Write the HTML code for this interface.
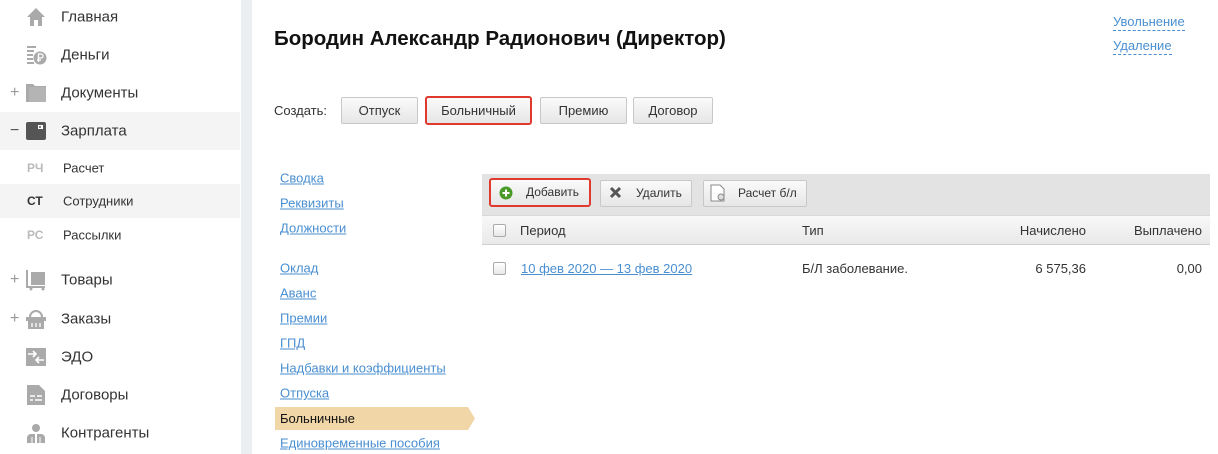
<!DOCTYPE html><html><head><meta charset="utf-8"><style>
body{margin:0;width:1218px;height:454px;overflow:hidden;background:#fff;font-family:"Liberation Sans",Arial,sans-serif;position:relative;color:#333}
.a{position:absolute;white-space:nowrap}
.side{position:absolute;left:0;top:0;width:240px;height:454px;background:#fff}
.strip{position:absolute;left:241px;top:0;width:11px;height:454px;background:#eceff2}
.mi{position:absolute;left:61px;font-size:15px;color:#333;transform:translateY(-50%)}
.si{position:absolute;left:63px;font-size:13px;color:#333;transform:translateY(-50%)}
.ab{position:absolute;left:27px;font-size:12px;font-weight:bold;color:#bbb;transform:translateY(-50%)}
.pl{position:absolute;left:10px;font-size:16px;color:#999;transform:translateY(-50%)}
.ic{position:absolute;left:26px}
.btn{position:absolute;height:27px;border:1px solid #c8c8c8;border-radius:2px;background:linear-gradient(#fafafa,#e6e6e6);font-size:13px;color:#333;text-align:center;line-height:25px;box-sizing:border-box}
.red{border:2px solid #e03a2f;border-radius:3px}
.lk{position:absolute;left:280px;font-size:13px;color:#4a8fd1;text-decoration:underline;transform:translateY(-50%)}
.cb{position:absolute;width:11px;height:11px;border:1px solid #aaa;border-radius:2px;background:linear-gradient(#fff,#e8e8e8)}
</style></head><body>
<div class="side"></div><div class="strip"></div>
<div class="a" style="left:0;top:112px;width:240px;height:38px;background:#f4f4f4"></div>
<div class="a" style="left:0;top:184px;width:240px;height:34px;background:#f4f4f4"></div>

<svg class="ic" style="top:7px" width="20" height="20" viewBox="0 0 20 20"><path d="M10 1L1 10h3v9h4v-6h4v6h4v-9h3z" fill="#aaa"/></svg>
<div class="mi" style="top:17px">Главная</div>
<svg class="ic" style="top:45px" width="22" height="20" viewBox="0 0 22 20"><rect x="1" y="1" width="9" height="2" fill="#aaa"/><rect x="1" y="5" width="7" height="2" fill="#aaa"/><rect x="1" y="9" width="6" height="2" fill="#aaa"/><rect x="1" y="13" width="6" height="2" fill="#aaa"/><rect x="1" y="17" width="7" height="2" fill="#aaa"/><circle cx="14" cy="13" r="6.5" fill="#aaa"/><path d="M12.5 17v-8h2.5a2 2 0 010 4h-3.5M11 15h4" stroke="#fff" stroke-width="1.3" fill="none"/></svg>
<div class="mi" style="top:55px">Деньги</div>
<div class="pl" style="top:93px">+</div>
<svg class="ic" style="top:83px" width="21" height="19" viewBox="0 0 21 19"><path d="M0 1h7l2 2h11v16H0z" fill="#aaa"/><rect x="3" y="4" width="17" height="15" fill="#b4b4b4"/></svg>
<div class="mi" style="top:93px">Документы</div>
<div class="pl" style="top:131px;color:#555">−</div>
<svg class="ic" style="top:122px" width="20" height="18" viewBox="0 0 20 18"><rect x="0" y="0" width="20" height="18" rx="2" fill="#555"/><rect x="12" y="3" width="5" height="4" fill="#fff"/><circle cx="14" cy="5" r="1" fill="#555"/></svg>
<div class="mi" style="top:131px">Зарплата</div>
<div class="ab" style="top:168px">РЧ</div><div class="si" style="top:168px">Расчет</div>
<div class="ab" style="top:201px;color:#333">СТ</div><div class="si" style="top:201px">Сотрудники</div>
<div class="ab" style="top:235px">РС</div><div class="si" style="top:235px">Рассылки</div>
<div class="pl" style="top:280px">+</div>
<svg class="ic" style="top:270px" width="20" height="21" viewBox="0 0 20 21"><path d="M1 0v17h18" stroke="#aaa" stroke-width="2" fill="none"/><rect x="5" y="2" width="14" height="13" fill="#aaa"/><circle cx="5" cy="19" r="1.5" fill="#aaa"/><circle cx="17" cy="19" r="1.5" fill="#aaa"/></svg>
<div class="mi" style="top:280px">Товары</div>
<div class="pl" style="top:319px">+</div>
<svg class="ic" style="top:309px" width="20" height="20" viewBox="0 0 20 20"><path d="M4 8a6 6 0 0112 0" stroke="#aaa" stroke-width="2" fill="none"/><rect x="0" y="8" width="20" height="4" fill="#aaa"/><rect x="2" y="12" width="16" height="8" fill="#aaa"/><path d="M6 14v4M10 14v4M14 14v4" stroke="#fff" stroke-width="1.3"/></svg>
<div class="mi" style="top:319px">Заказы</div>
<svg class="ic" style="top:348px" width="20" height="18" viewBox="0 0 20 18"><rect width="20" height="18" fill="#aaa"/><path d="M2 6h8M7 3l3 3-3 3M18 12h-8M13 9l-3 3 3 3" stroke="#fff" stroke-width="1.6" fill="none"/></svg>
<div class="mi" style="top:357px">ЭДО</div>
<svg class="ic" style="top:385px;left:27px" width="18" height="20" viewBox="0 0 18 20"><path d="M0 0h12l6 6v14H0z" fill="#aaa"/><path d="M3 11h5M10 11h5M3 15h3M8 15h7" stroke="#fff" stroke-width="1.4"/></svg>
<div class="mi" style="top:395px">Договоры</div>
<svg class="ic" style="top:423px" width="20" height="20" viewBox="0 0 20 20"><circle cx="10" cy="5" r="4" fill="#aaa"/><path d="M1 20v-5a4 4 0 014-4h10a4 4 0 014 4v5z" fill="#aaa"/><path d="M10 11v9" stroke="#fff" stroke-width="2"/><path d="M6 14v6M14 14v6" stroke="#fff" stroke-width="1"/></svg>
<div class="mi" style="top:433px">Контрагенты</div>

<div class="a" style="left:274px;top:27px;font-size:20.5px;font-weight:bold;color:#111">Бородин Александр Радионович (Директор)</div>
<div class="a" style="left:1113px;top:14px;font-size:13px;color:#4a8fd1;border-bottom:1px dashed #4a8fd1;line-height:16px">Увольнение</div>
<div class="a" style="left:1113px;top:38px;font-size:13px;color:#4a8fd1;border-bottom:1px dashed #4a8fd1;line-height:16px">Удаление</div>

<div class="a" style="left:274px;top:103px;font-size:13px">Создать:</div>
<div class="btn" style="left:341px;top:97px;width:77px">Отпуск</div>
<div class="btn red" style="left:425px;top:96px;width:107px;height:29px">Больничный</div>
<div class="btn" style="left:540px;top:97px;width:87px">Премию</div>
<div class="btn" style="left:633px;top:97px;width:80px">Договор</div>

<div class="lk" style="top:178px">Сводка</div>
<div class="lk" style="top:203px">Реквизиты</div>
<div class="lk" style="top:228px">Должности</div>
<div class="lk" style="top:268px">Оклад</div>
<div class="lk" style="top:293px">Аванс</div>
<div class="lk" style="top:318px">Премии</div>
<div class="lk" style="top:343px">ГПД</div>
<div class="lk" style="top:368px">Надбавки и коэффициенты</div>
<div class="lk" style="top:393px">Отпуска</div>
<svg class="a" style="left:275px;top:407px" width="201" height="23"><path d="M0 0h193l7 11.5-7 11.5H0z" fill="#f1d6a8"/></svg>
<div class="a" style="left:280px;top:411px;font-size:13px;color:#111">Больничные</div>
<div class="lk" style="top:443px">Единовременные пособия</div>

<div class="a" style="left:482px;top:174px;width:728px;height:41px;background:#e3e3e3"></div>
<div class="btn red" style="left:489px;top:178px;width:102px;height:29px;font-size:12px;text-align:left;padding-left:35px">Добавить</div>
<svg class="a" style="left:499px;top:186px" width="14" height="14"><circle cx="7" cy="7" r="6.5" fill="#4a9a2a"/><path d="M7 3.5v7M3.5 7h7" stroke="#fff" stroke-width="2"/></svg>
<div class="btn" style="left:600px;top:180px;width:92px;font-size:12px;text-align:left;padding-left:35px">Удалить</div>
<svg class="a" style="left:609px;top:186px" width="13" height="13"><path d="M2 2l9 9M11 2l-9 9" stroke="#555" stroke-width="3"/></svg>
<div class="btn" style="left:703px;top:180px;width:104px;font-size:12px;text-align:left;padding-left:34px">Расчет б/л</div>
<svg class="a" style="left:710px;top:184px" width="16" height="18"><path d="M1 1h9l4 4v12H1z" fill="#fff" stroke="#888"/><circle cx="11" cy="13" r="3" fill="#ddd" stroke="#888"/></svg>

<div class="a" style="left:482px;top:215px;width:728px;height:30px;background:linear-gradient(#f8f8f8,#e9e9e9);border-top:1px solid #d8d8d8;border-bottom:1px solid #d0d0d0;box-sizing:border-box"></div>
<div class="cb" style="left:493px;top:224px"></div>
<div class="a" style="left:520px;top:223px;font-size:13px">Период</div>
<div class="a" style="left:802px;top:223px;font-size:13px">Тип</div>
<div class="a" style="left:1000px;width:86px;text-align:right;top:223px;font-size:13px">Начислено</div>
<div class="a" style="left:1110px;width:92px;text-align:right;top:223px;font-size:13px">Выплачено</div>
<div class="cb" style="left:493px;top:262px"></div>
<div class="a" style="left:521px;top:261px;font-size:13px;color:#4a8fd1;text-decoration:underline">10 фев 2020 — 13 фев 2020</div>
<div class="a" style="left:802px;top:261px;font-size:13px">Б/Л заболевание.</div>
<div class="a" style="left:1000px;width:86px;text-align:right;top:261px;font-size:13px">6 575,36</div>
<div class="a" style="left:1110px;width:92px;text-align:right;top:261px;font-size:13px">0,00</div>
</body></html>
